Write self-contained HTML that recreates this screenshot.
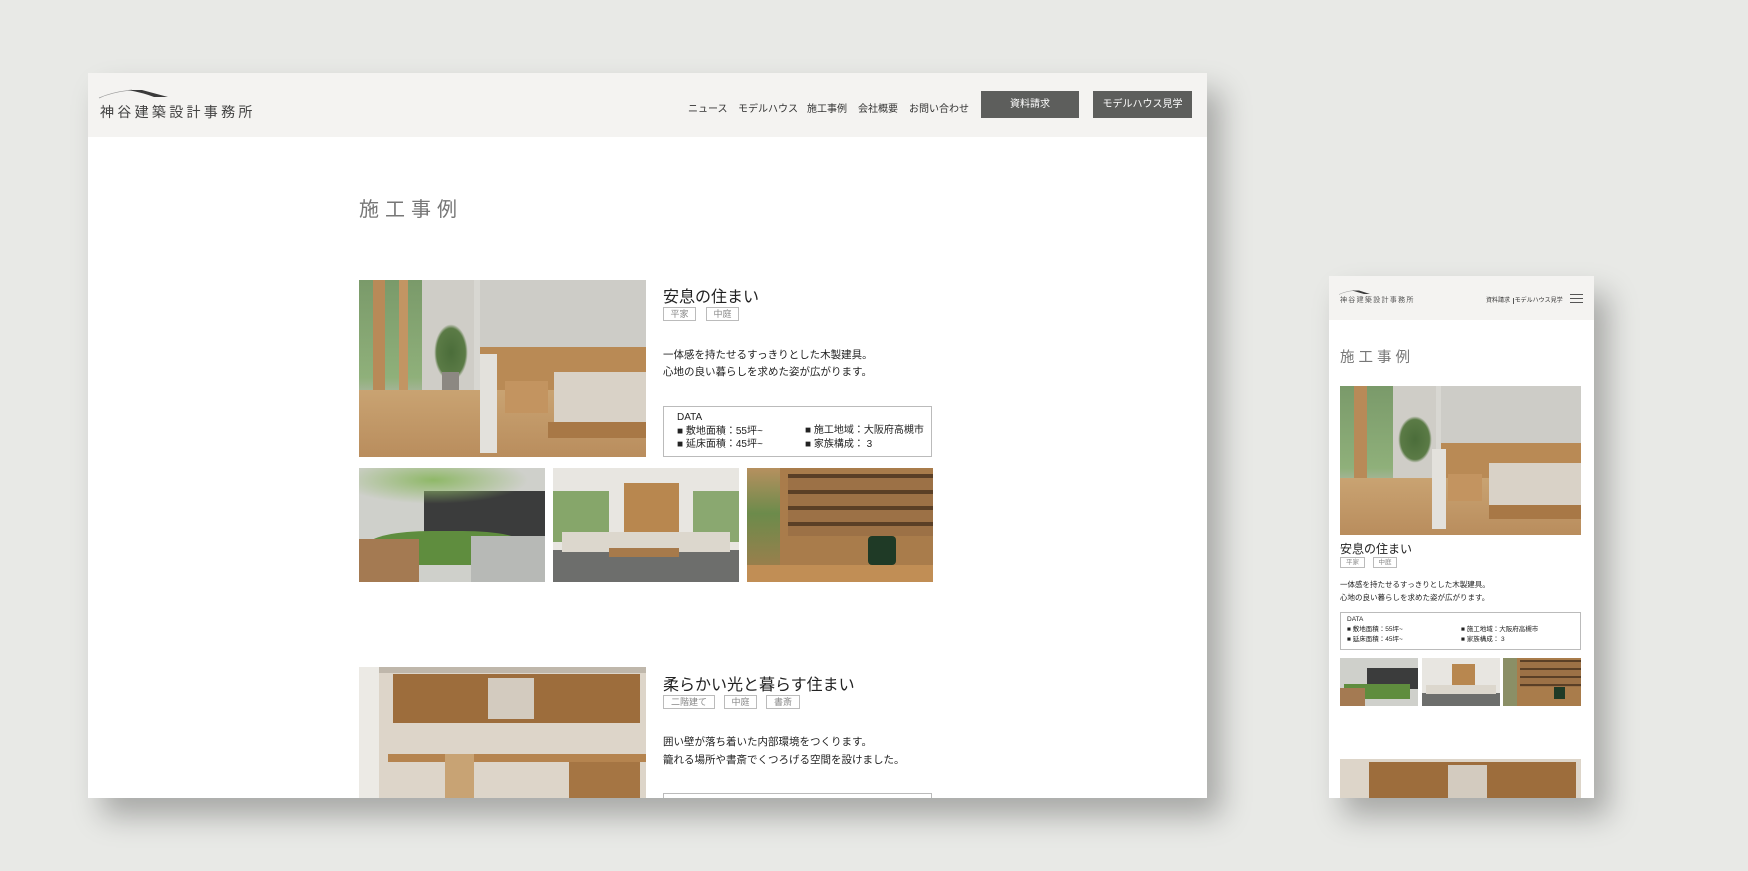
<!DOCTYPE html>
<html><head><meta charset="utf-8"><style>
*{margin:0;padding:0;box-sizing:border-box}
body{width:1748px;height:871px;background:#e8e9e6;position:relative;overflow:hidden;font-family:"Liberation Sans","Noto Sans CJK JP",sans-serif;color:#333}
.abs{position:absolute}
.frame{position:absolute;background:#fff;overflow:hidden;box-shadow:14px 18px 28px rgba(0,0,0,.28)}
.hdr{position:absolute;left:0;top:0;right:0;background:#f4f3f1}
.ph{position:absolute;overflow:hidden}
.ph span{position:absolute;display:block}
.tag{position:absolute;border:1px solid #bbb;color:#888;font-size:9px;text-align:center}
.nav{position:absolute;font-size:10px;color:#333;white-space:nowrap}
.btn{position:absolute;background:#5d5e5c;color:#fff;font-size:10px;text-align:center;line-height:27px;height:27px}
.data{position:absolute;border:1px solid #bbb}
</style></head><body>

<!-- DESKTOP -->
<div class="frame" style="left:88px;top:73px;width:1119px;height:725px">
 <div class="hdr" style="height:64px"></div>
 <svg class="abs" style="left:10px;top:16px" width="72" height="10"><path d="M1 9 Q14 3 34 1" stroke="#999" stroke-width=".7" fill="none"/><path d="M30 1 L44 1 L70 8 L56 8 Q46 4 30 1 Z" fill="#3a3a3a"/></svg>
 <div class="abs" style="left:12px;top:29px;font-size:14px;letter-spacing:3.3px;color:#444;white-space:nowrap">神谷建築設計事務所</div>
 <div class="nav" style="left:600px;top:27px">ニュース</div>
 <div class="nav" style="left:650px;top:27px">モデルハウス</div>
 <div class="nav" style="left:719px;top:27px">施工事例</div>
 <div class="nav" style="left:770px;top:27px">会社概要</div>
 <div class="nav" style="left:821px;top:27px">お問い合わせ</div>
 <div class="btn" style="left:893px;top:18px;width:98px">資料請求</div>
 <div class="btn" style="left:1005px;top:18px;width:99px">モデルハウス見学</div>

 <div class="abs" style="left:271px;top:120px;font-size:20px;letter-spacing:6px;color:#777">施工事例</div>

 <!-- bedroom -->
 <div class="ph" style="left:271px;top:207px;width:287px;height:177px;background:#d8d7d2">
  <span style="left:0;top:0;width:22%;height:100%;background:linear-gradient(#7a9a6a,#8fb07a 55%,#b7b8b0 70%,#9d9a92)"></span>
  <span style="left:5%;top:0;width:4%;height:82%;background:#b88a58"></span>
  <span style="left:14%;top:0;width:3%;height:75%;background:#c29563"></span>
  <span style="left:22%;top:0;width:18%;height:70%;background:#cfcdc7"></span>
  <span style="left:42%;top:0;width:58%;height:38%;background:#cdccc7"></span>
  <span style="left:26%;top:25%;width:12%;height:32%;background:radial-gradient(#4b6d3a,#5b7b46 60%,transparent 70%)"></span>
  <span style="left:29%;top:52%;width:6%;height:10%;background:#8c8882"></span>
  <span style="left:42%;top:38%;width:58%;height:32%;background:#b98a55"></span>
  <span style="left:0;top:62%;width:100%;height:38%;background:linear-gradient(#c9a372,#b98d5d)"></span>
  <span style="left:42%;top:42%;width:6%;height:56%;background:#e3e1dc"></span>
  <span style="left:51%;top:57%;width:15%;height:18%;background:#c39460"></span>
  <span style="left:68%;top:52%;width:32%;height:28%;background:#d9d2c7"></span>
  <span style="left:66%;top:80%;width:34%;height:9%;background:#a87846"></span>
 </div>
 <div class="abs" style="left:575px;top:210px;font-size:16px;color:#222">安息の住まい</div>
 <div class="tag" style="left:575px;top:234px;width:33px;height:14px;line-height:12px">平家</div>
 <div class="tag" style="left:618px;top:234px;width:33px;height:14px;line-height:12px">中庭</div>
 <div class="abs" style="left:575px;top:274px;font-size:10.5px;line-height:16.5px;color:#222">一体感を持たせるすっきりとした木製建具。<br>心地の良い暮らしを求めた姿が広がります。</div>
 <div class="data" style="left:575px;top:333px;width:269px;height:51px"></div>
 <div class="abs" style="left:589px;top:338px;font-size:10px;color:#222;line-height:13.5px">DATA<br>■ 敷地面積：55坪~<br>■ 延床面積：45坪~</div>
 <div class="abs" style="left:717px;top:351px;font-size:10px;color:#222;line-height:13.5px">■ 施工地域：大阪府高槻市<br>■ 家族構成： 3</div>

 <!-- courtyard -->
 <div class="ph" style="left:271px;top:395px;width:186px;height:114px;background:#cfd0cb">
  <span style="left:35%;top:20%;width:65%;height:45%;background:#3b3c3c"></span>
  <span style="left:0;top:0;width:100%;height:35%;background:radial-gradient(ellipse at 40% 30%,#8fb868,transparent 60%)"></span>
  <span style="left:5%;top:55%;width:85%;height:30%;background:#5f8d3e;border-radius:40% 40% 0 0"></span>
  <span style="left:0;top:62%;width:32%;height:38%;background:#a47a52"></span>
  <span style="left:60%;top:60%;width:40%;height:40%;background:#b7b9b6"></span>
 </div>
 <!-- living -->
 <div class="ph" style="left:465px;top:395px;width:186px;height:114px;background:#e8e6e1">
  <span style="left:0;top:20%;width:30%;height:45%;background:#86a66a"></span>
  <span style="left:75%;top:20%;width:25%;height:45%;background:#8aa870"></span>
  <span style="left:38%;top:13%;width:30%;height:55%;background:#b8874f"></span>
  <span style="left:0;top:72%;width:100%;height:28%;background:#6d6e6c"></span>
  <span style="left:5%;top:56%;width:90%;height:18%;background:#dcd7cd"></span>
  <span style="left:30%;top:70%;width:38%;height:8%;background:#a77a4b"></span>
 </div>
 <!-- library -->
 <div class="ph" style="left:659px;top:395px;width:186px;height:114px;background:#a97c4b">
  <span style="left:0;top:0;width:18%;height:100%;background:linear-gradient(#b6905f,#6c8b4b 40%,#a77b4c)"></span>
  <span style="left:22%;top:5%;width:78%;height:55%;background:repeating-linear-gradient(#5a3f26 0 4px,#9c7146 4px 16px)"></span>
  <span style="left:0;top:85%;width:100%;height:15%;background:#c18e55"></span>
  <span style="left:65%;top:60%;width:15%;height:25%;background:#1f3a26;border-radius:4px"></span>
 </div>

 <!-- study -->
 <div class="ph" style="left:271px;top:594px;width:287px;height:140px;background:#ddd5c9">
  <span style="left:0;top:0;width:100%;height:4%;background:#bfb7ab"></span>
  <span style="left:0;top:0;width:7%;height:100%;background:#eceae5"></span>
  <span style="left:12%;top:5%;width:86%;height:35%;background:#9d6d3c"></span>
  <span style="left:45%;top:8%;width:16%;height:29%;background:#d3cbbf"></span>
  <span style="left:10%;top:62%;width:90%;height:6%;background:#b5844f"></span>
  <span style="left:73%;top:68%;width:25%;height:32%;background:#a57543"></span>
  <span style="left:30%;top:62%;width:10%;height:38%;background:#c8a374"></span>
 </div>
 <div class="abs" style="left:575px;top:598px;font-size:16px;color:#222">柔らかい光と暮らす住まい</div>
 <div class="tag" style="left:575px;top:622px;width:52px;height:14px;line-height:12px">二階建て</div>
 <div class="tag" style="left:636px;top:622px;width:33px;height:14px;line-height:12px">中庭</div>
 <div class="tag" style="left:678px;top:622px;width:34px;height:14px;line-height:12px">書斎</div>
 <div class="abs" style="left:575px;top:661px;font-size:10.5px;line-height:17.5px;color:#222">囲い壁が落ち着いた内部環境をつくります。<br>籠れる場所や書斎でくつろげる空間を設けました。</div>
 <div class="data" style="left:575px;top:720px;width:269px;height:40px"></div>
</div>

<!-- MOBILE -->
<div class="frame" style="left:1329px;top:276px;width:265px;height:522px">
 <div class="hdr" style="height:44px"></div>
 <svg class="abs" style="left:10px;top:14px" width="32" height="5"><path d="M0 4.5 Q6 1.5 15 .5" stroke="#999" stroke-width=".5" fill="none"/><path d="M13 .5 L20 .5 L31 4 L25 4 Z" fill="#3a3a3a"/></svg>
 <div class="abs" style="left:11px;top:19px;font-size:7px;letter-spacing:1.3px;color:#555;white-space:nowrap">神谷建築設計事務所</div>
 <div class="abs" style="left:157px;top:19px;font-size:6px;color:#333;white-space:nowrap">資料請求 <span style="border-left:1px solid #555;margin:0 1px"></span> モデルハウス見学</div>
 <div class="abs" style="left:241px;top:18px;width:13px;height:1px;background:#555;box-shadow:0 4px 0 #555,0 8px 0 #555"></div>
 <div class="abs" style="left:11px;top:70px;font-size:14.5px;letter-spacing:4px;color:#777">施工事例</div>
 <div class="ph" style="left:11px;top:110px;width:241px;height:149px;background:#d8d7d2">
  <span style="left:0;top:0;width:22%;height:100%;background:linear-gradient(#7a9a6a,#8fb07a 55%,#b7b8b0 70%,#9d9a92)"></span>
  <span style="left:6%;top:0;width:5%;height:80%;background:#b88a58"></span>
  <span style="left:22%;top:0;width:18%;height:70%;background:#cfcdc7"></span>
  <span style="left:42%;top:0;width:58%;height:38%;background:#cdccc7"></span>
  <span style="left:24%;top:20%;width:14%;height:32%;background:radial-gradient(#4b6d3a,#5b7b46 60%,transparent 70%)"></span>
  <span style="left:42%;top:38%;width:58%;height:32%;background:#b98a55"></span>
  <span style="left:0;top:62%;width:100%;height:38%;background:linear-gradient(#c9a372,#b98d5d)"></span>
  <span style="left:38%;top:42%;width:6%;height:54%;background:#e3e1dc"></span>
  <span style="left:45%;top:59%;width:14%;height:18%;background:#c39460"></span>
  <span style="left:62%;top:52%;width:38%;height:28%;background:#d9d2c7"></span>
  <span style="left:62%;top:80%;width:38%;height:9%;background:#a87846"></span>
 </div>
 <div class="abs" style="left:11px;top:264px;font-size:12px;color:#222">安息の住まい</div>
 <div class="tag" style="left:11px;top:281px;width:25px;height:11px;font-size:6.5px;line-height:9px">平家</div>
 <div class="tag" style="left:44px;top:281px;width:24px;height:11px;font-size:6.5px;line-height:9px">中庭</div>
 <div class="abs" style="left:11px;top:302px;font-size:7.5px;line-height:13px;color:#222">一体感を持たせるすっきりとした木製建具。<br>心地の良い暮らしを求めた姿が広がります。</div>
 <div class="data" style="left:11px;top:336px;width:241px;height:38px"></div>
 <div class="abs" style="left:18px;top:339px;font-size:6.5px;color:#222;line-height:10px">DATA<br>■ 敷地面積：55坪~<br>■ 延床面積：45坪~</div>
 <div class="abs" style="left:132px;top:349px;font-size:6.5px;color:#222;line-height:10px">■ 施工地域：大阪府高槻市<br>■ 家族構成： 3</div>
 <div class="ph" style="left:11px;top:382px;width:78px;height:48px;background:#cfd0cb">
  <span style="left:35%;top:20%;width:65%;height:45%;background:#3b3c3c"></span>
  <span style="left:5%;top:55%;width:85%;height:30%;background:#5f8d3e"></span>
  <span style="left:0;top:62%;width:32%;height:38%;background:#a47a52"></span>
 </div>
 <div class="ph" style="left:93px;top:382px;width:78px;height:48px;background:#e8e6e1">
  <span style="left:38%;top:13%;width:30%;height:55%;background:#b8874f"></span>
  <span style="left:0;top:72%;width:100%;height:28%;background:#6d6e6c"></span>
  <span style="left:5%;top:56%;width:90%;height:18%;background:#dcd7cd"></span>
 </div>
 <div class="ph" style="left:174px;top:382px;width:78px;height:48px;background:#a97c4b">
  <span style="left:0;top:0;width:18%;height:100%;background:#8b8f66"></span>
  <span style="left:22%;top:5%;width:78%;height:55%;background:repeating-linear-gradient(#5a3f26 0 2px,#9c7146 2px 8px)"></span>
  <span style="left:65%;top:60%;width:15%;height:25%;background:#1f3a26"></span>
 </div>
 <div class="ph" style="left:11px;top:483px;width:241px;height:60px;background:#ddd5c9">
  <span style="left:12%;top:5%;width:86%;height:80%;background:#9d6d3c"></span>
  <span style="left:45%;top:10%;width:16%;height:80%;background:#d3cbbf"></span>
 </div>
</div>
</body></html>
